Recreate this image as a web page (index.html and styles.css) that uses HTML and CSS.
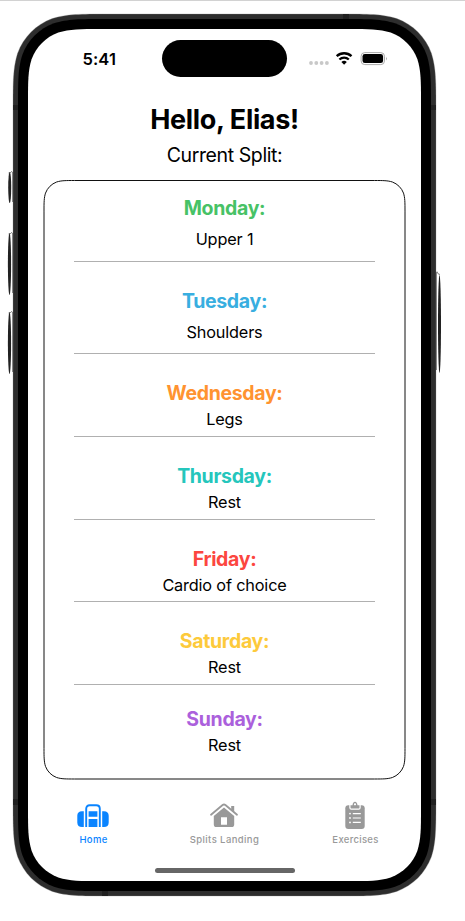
FILE: index.html
```html
<!DOCTYPE html>
<html lang="en">
<head>
<meta charset="utf-8">
<title>Current Split</title>
<link rel="stylesheet" href="styles.css">
</head>
<body>
<svg class="device" viewBox="0 0 465 921" aria-hidden="true">
  <g class="buttons">
    <ellipse cx="9.7" cy="187.500" rx="1.500" ry="15.500"/>
    <ellipse cx="9.500" cy="264" rx="1.600" ry="31"/>
    <ellipse cx="9.500" cy="343" rx="1.600" ry="31"/>
    <ellipse cx="439.500" cy="324" rx="1.500" ry="49"/>
  </g>
  <path class="button-edge" d="M8.500 173q3 0 3.500-2M8.500 234q3 0 3.500-2M8.500 313q3 0 3.500-2M437 271.500q.5 3 3 3M12.500 172v30M12.500 233v60M12.500 312v60M436.500 272v98"/>
  <path class="frame" d="M107.800 14H341.200C368.500 14 382.200 14 396.800 18.600C412.900 24.500 425.500 37.100 431.400 53.200C436 67.800 436 81.500 436 108.800V801.200C436 828.500 436 842.200 431.400 856.800C425.500 872.900 412.900 885.500 396.800 891.400C382.200 896 368.500 896 341.200 896H107.800C80.500 896 66.800 896 52.200 891.400C36.100 885.500 23.500 872.900 17.600 856.800C13 842.200 13 828.500 13 801.200V108.800C13 81.500 13 67.800 17.600 53.200C23.500 37.100 36.100 24.500 52.200 18.600C66.800 14 80.500 14 107.800 14Z"/>
  <path class="bands" d="M343 14h6v5h-6zM102 891h6v5h-6zM13 105h5v5h-5zM431 105h5v5h-5zM13 799h5v6h-5zM431 799h5v6h-5z"/>
  <path class="bezel" d="M105.100 19H343.900C369 19 381.500 19 395 23.300C409.700 28.600 421.400 40.300 426.700 55C431 68.500 431 81 431 106.100V803.900C431 829 431 841.500 426.700 855C421.400 869.700 409.700 881.400 395 886.700C381.500 891 369 891 343.900 891H105.100C80 891 67.500 891 54 886.700C39.300 881.400 27.600 869.700 22.300 855C18 841.500 18 829 18 803.900V106.100C18 81 18 68.500 22.300 55C27.600 40.300 39.300 28.600 54 23.300C67.500 19 80 19 105.100 19Z"/>
  <path class="glass" d="M101.400 29H347.600C368.800 29 379.300 29 390.700 32.600C403.100 37.100 412.900 46.900 417.400 59.300C421 70.700 421 81.200 421 102.400V807.600C421 828.800 421 839.300 417.400 850.700C412.900 863.100 403.100 872.900 390.700 877.400C379.300 881 368.800 881 347.600 881H101.400C80.200 881 69.700 881 58.300 877.400C45.900 872.900 36.100 863.100 31.600 850.700C28 839.300 28 828.800 28 807.600V102.400C28 81.200 28 70.700 31.600 59.300C36.100 46.900 45.900 37.100 58.300 32.600C69.700 29 80.200 29 101.400 29Z"/>
</svg>

<main class="screen">
  <header class="status">
    <span class="time">5:41</span>
    <span class="island"></span>
    <svg class="indicators" viewBox="0 0 80 16" aria-hidden="true">
      <g fill="#c8c8c8"><circle cx="2" cy="12" r="1.900"/><circle cx="7.300" cy="12" r="1.900"/><circle cx="12.600" cy="12" r="1.900"/><circle cx="17.900" cy="12" r="1.900"/></g>
      <g fill="none" stroke="#000" stroke-width="2.300"><path d="M27.700 5.200a10.800 10.800 0 0 1 14.800 0"/><path d="M30.400 8.500a7 7 0 0 1 9.400 0"/></g>
      <path d="M32.400 11a4.200 4.200 0 0 1 5.400 0L35.100 13.700z"/>
      <rect x="52.100" y="1.600" width="23.400" height="12" rx="3.700" fill="none" stroke="#aaa"/>
      <rect x="53.500" y="3.100" width="20.600" height="9" rx="2.400"/>
      <path d="M77 5.700q1.700 1.900 0 3.800z" fill="#999"/>
    </svg>
  </header>

  <h1 class="greeting">Hello, Elias!</h1>
  <p class="subtitle">Current Split:</p>

  <section class="split">
    <svg class="outline" viewBox="0 0 363 600" aria-hidden="true"><path d="M31.600 .5H331.400C340.200 .5 344.600 .5 349.400 2C354.500 3.900 358.600 8 360.500 13.100C362 17.900 362 22.300 362 31.100V568.400C362 577.200 362 581.600 360.500 586.400C358.600 591.500 354.500 595.600 349.400 597.500C344.600 599 340.200 599 331.400 599H31.600C22.800 599 18.400 599 13.600 597.500C8.500 595.600 4.400 591.500 2.500 586.400C1 581.600 1 577.200 1 568.400V31.100C1 22.300 1 17.900 2.500 13.100C4.400 8 8.500 3.900 13.600 2C18.400 .5 22.800 .5 31.600 .5Z"/></svg>
    <article class="day first"><h2 class="green">Monday:</h2><p>Upper 1</p></article>
    <article class="day second"><h2 class="blue">Tuesday:</h2><p>Shoulders</p></article>
    <article class="day"><h2 class="orange">Wednesday:</h2><p>Legs</p></article>
    <article class="day"><h2 class="teal">Thursday:</h2><p>Rest</p></article>
    <article class="day short"><h2 class="red">Friday:</h2><p>Cardio of choice</p></article>
    <article class="day"><h2 class="yellow">Saturday:</h2><p>Rest</p></article>
    <article class="day last"><h2 class="purple">Sunday:</h2><p>Rest</p></article>
  </section>

  <nav class="tabs">
    <a class="tab active">
      <svg viewBox="0 0 36 30" aria-hidden="true">
        <path d="M8.800 9.200v15.800H7c-3 0-4.700-1.600-4.700-4.600v-6.600c0-3 1.700-4.600 4.700-4.600zM27.200 9.200v15.800H29c3 0 4.700-1.600 4.700-4.600v-6.600c0-3-1.700-4.600-4.700-4.600z"/>
        <path d="M11.200 25V6.700c0-2.300 1.300-3.500 3.500-3.500h6.600c2.200 0 3.500 1.200 3.500 3.500V25" fill="none" stroke="currentColor" stroke-width="1.900"/>
        <path d="M13.600 9.200h8.800v5.500h-8.800zM13.600 17h8.800v8h-8.800z"/>
      </svg>
      <span>Home</span>
    </a>
    <a class="tab">
      <svg viewBox="0 0 36 30" aria-hidden="true">
        <path d="M5 12.700L16.600 3q1.400-1.100 2.800 0L31 12.700" fill="none" stroke="currentColor" stroke-width="1.800" stroke-linecap="round" stroke-linejoin="round"/>
        <path d="M25.200 4h3v6.600l-3-2.500z"/>
        <path fill-rule="evenodd" d="M18 5.600L28.200 14v8.400c0 1.600-.9 2.600-2.600 2.600H10.400c-1.700 0-2.600-1-2.600-2.600V14zM15 15.300v7.500h6v-7.500z"/>
      </svg>
      <span class="wide">Splits Landing</span>
    </a>
    <a class="tab">
      <svg viewBox="0 0 36 30" aria-hidden="true">
        <rect x="8.300" y="3.200" width="19.400" height="23.800" rx="3"/>
        <path d="M12.300 2.200h11.400v3.500q0 2-2 2h-7.400q-2 0-2-2z" fill="#fff"/>
        <path fill-rule="evenodd" d="M13.500 3.300h2c.2-2 1.100-3.500 2.500-3.500s2.300 1.500 2.500 3.500h2v2.100q0 1.200-1.200 1.200h-6.600q-1.200 0-1.200-1.200zM18 1.200a1.100 1.100 0 1 0 0 2.200 1.100 1.100 0 0 0 0-2.200z"/>
        <g fill="#fff"><path d="M15.800 11h8v1.200h-8zM15.800 15.400h8v1.200h-8zM15.800 19.800h8v1.200h-8z"/><circle cx="13" cy="11.600" r=".9"/><circle cx="13" cy="16" r=".9"/><circle cx="13" cy="20.400" r=".9"/></g>
      </svg>
      <span>Exercises</span>
    </a>
  </nav>
  <div class="home-bar"></div>
</main>
</body>
</html>
```
FILE: styles.css
```css
* { box-sizing: border-box; }
body {
  margin: 0;
  width: 465px;
  height: 921px;
  overflow: hidden;
  position: relative;
  background: #fff;
  border-top: 1px solid #d2d2d2;
  color: #000;
  font-family: Inter, "Liberation Sans", sans-serif;
}
h1, h2, p { margin: 0; }

.device { position: absolute; top: -1px; left: 0; width: 465px; height: 921px; }
.frame { fill: #2d2d2d; stroke: #8a8a8a; stroke-width: .3; }
.bands { fill: #202020; }
.bezel { fill: #000; }
.glass { fill: #fff; }
.buttons { fill: #222; }
.button-edge { fill: none; stroke: #555; stroke-width: .7; }

.screen {
  position: relative;
  width: 393px;
  height: 852px;
  margin: 28px 0 0 28px;
  display: flex;
  flex-direction: column;
}

.status {
  height: 59px;
  display: grid;
  grid-template-columns: 134px 125px 134px;
  align-items: center;
}
.time { padding-left: 54.5px; font-size: 16.5px; font-weight: 600; letter-spacing: .1px; }
.island { height: 37px; border-radius: 19px; background: #000; }
.indicators { width: 80px; height: 16px; margin-left: 22px; }

.greeting {
  height: 36px;
  margin-top: 14px;
  line-height: 36px;
  text-align: center;
  font-size: 27px;
  font-weight: 700;
  letter-spacing: -.35px;
}
.subtitle {
  height: 26px;
  margin-top: 4px;
  line-height: 26px;
  text-align: center;
  font-size: 19.5px;
  letter-spacing: -.4px;
}

.split {
  position: relative;
  width: 363px;
  height: 600px;
  margin: 12px 0 0 15px;
  padding: 0 31px;
}
.outline { position: absolute; inset: 0; width: 363px; height: 600px; }
.outline path { fill: none; stroke: #111; stroke-width: 1; }

.day {
  height: 83px;
  padding-top: 26px;
  border-bottom: 1px solid #b0b0b0;
  text-align: center;
}
.day h2 { line-height: 26px; font-size: 19.5px; font-weight: 700; letter-spacing: -.33px; }
.day p { margin-top: 3px; line-height: 20px; font-size: 16.3px; letter-spacing: -.17px; }
.first { height: 82px; padding-top: 15px; }
.second { height: 92px; }
.first p, .second p { margin-top: 8px; }
.short { height: 82px; }
.last { padding-top: 21px; border-bottom: 0; }

.green { color: #47c266; }
.blue { color: #38aee0; }
.orange { color: #ff9330; }
.teal { color: #25c6bc; }
.red { color: #fc463f; }
.yellow { color: #fdca3b; }
.purple { color: #ab60dc; }

.tabs {
  display: grid;
  grid-template-columns: repeat(3, 131px);
  margin-top: 22px;
}
.tab {
  display: flex;
  flex-direction: column;
  align-items: center;
  color: #999;
  font-size: 9.5px;
  font-weight: 500;
  line-height: 14px;
}
.tab svg { width: 36px; height: 30px; margin: 0 1px 1px 0; fill: currentColor; overflow: visible; }
.tab.active { color: #0a84ff; }
.tab span { letter-spacing: .3px; }
.tab .wide { letter-spacing: .4px; }

.home-bar {
  width: 140px;
  height: 5px;
  margin: 21px auto 0;
  border-radius: 3px;
  background: #666;
}
```
